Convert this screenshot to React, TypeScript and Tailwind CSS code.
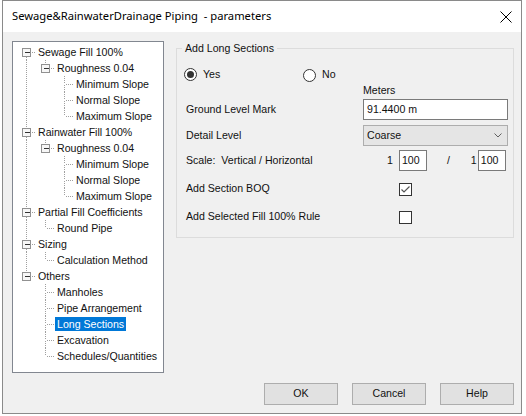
import React from "react";

interface Node {
  label: string;
  selected?: boolean;
  children?: Node[];
}

interface Row {
  label: string;
  level: number;
  selected: boolean;
  hasChildren: boolean;
  hasNext: boolean;
  isFirstRoot: boolean;
  cont: boolean[];
}

const slopes: Node[] = [{ label: "Minimum Slope" }, { label: "Normal Slope" }, { label: "Maximum Slope" }];

const TREE: Node[] = [
  { label: "Sewage Fill 100%", children: [{ label: "Roughness 0.04", children: slopes }] },
  { label: "Rainwater Fill 100%", children: [{ label: "Roughness 0.04", children: slopes }] },
  { label: "Partial Fill Coefficients", children: [{ label: "Round Pipe" }] },
  { label: "Sizing", children: [{ label: "Calculation Method" }] },
  {
    label: "Others",
    children: [
      { label: "Manholes" },
      { label: "Pipe Arrangement" },
      { label: "Long Sections", selected: true },
      { label: "Excavation" },
      { label: "Schedules/Quantities" },
    ],
  },
];

function flatten(nodes: Node[], level: number, cont: boolean[], out: Row[]) {
  nodes.forEach((n, i) => {
    const hasNext = i < nodes.length - 1;
    out.push({
      label: n.label,
      level,
      selected: !!n.selected,
      hasChildren: !!n.children?.length,
      hasNext,
      isFirstRoot: level === 0 && i === 0,
      cont,
    });
    if (n.children) flatten(n.children, level + 1, [...cont, hasNext], out);
  });
  return out;
}

const ROWS = flatten(TREE, 0, [], []);
const COL = 19;

function Connectors({ row }: { row: Row }) {
  const w = COL * (row.level + 1);
  const own = row.level * COL + 9.5;
  return (
    <svg width={w} height={16} className="shrink-0" shapeRendering="crispEdges">
      {row.cont.map((c, j) =>
        c ? (
          <line key={j} x1={j * COL + 9.5} y1={0} x2={j * COL + 9.5} y2={16} stroke="#a0a0a0" strokeDasharray="1 1" />
        ) : null
      )}
      {!row.isFirstRoot && (
        <line x1={own} y1={0} x2={own} y2={8} stroke="#a0a0a0" strokeDasharray="1 1" />
      )}
      {row.hasNext && (
        <line x1={own} y1={9} x2={own} y2={16} stroke="#a0a0a0" strokeDasharray="1 1" />
      )}
      <line x1={own + 1} y1={8.5} x2={w} y2={8.5} stroke="#a0a0a0" strokeDasharray="1 1" />
      {row.hasChildren && (
        <g>
          <rect x={own - 4} y={4.5} width={8} height={8} fill="#f7f7f7" stroke="#919191" />
          <line x1={own - 2} y1={8.5} x2={own + 3} y2={8.5} stroke="#333" />
        </g>
      )}
    </svg>
  );
}

function Radio({ checked }: { checked?: boolean }) {
  return (
    <span className="flex h-[13px] w-[13px] items-center justify-center rounded-full border border-[#333] bg-white">
      {checked && <span className="h-[7px] w-[7px] rounded-full bg-[#333]" />}
    </span>
  );
}

function Check({ checked }: { checked?: boolean }) {
  return (
    <span className="flex h-[13px] w-[13px] items-center justify-center border border-[#333] bg-white">
      {checked && (
        <svg width="11" height="11" viewBox="0 0 11 11">
          <path d="M1.5 5.5 L4 8 L9.5 2.5" fill="none" stroke="#555" strokeWidth="1.2" />
        </svg>
      )}
    </span>
  );
}

export default function App() {
  return (
    <div className="h-[416px] w-[526px] bg-white font-['Liberation_Sans',Arial,sans-serif] text-[10.6px] text-[#111]">
      <div className="ml-[2px] flex h-[414px] w-[520px] flex-col border border-[#8a8a8a]">
        <div className="flex h-[31px] items-center justify-between bg-white pl-[9px] pr-[9px] font-['Noto_Sans',sans-serif] text-[11.2px] text-black">
          <span className="whitespace-pre">Sewage&RainwaterDrainage Piping  - parameters</span>
          <svg width="12" height="12" viewBox="0 0 12 12">
            <path d="M0.5 0.5 L11.5 11.5 M11.5 0.5 L0.5 11.5" stroke="#000" strokeWidth="1" />
          </svg>
        </div>
        <div className="flex flex-1 flex-col bg-[#f0f0f0] pl-[9px] pt-[9px]">
          <div className="flex items-start">
            <div className="h-[332px] w-[152px] border border-[#828790] bg-white pl-[4px] pt-[2px]">
              {ROWS.map((r, i) => (
                <div key={i} className="flex h-[16px] items-center">
                  <Connectors row={r} />
                  <span
                    className={`h-[14px] whitespace-nowrap px-[2px] leading-[14px] ${
                      r.selected ? "bg-[#0078d7] text-white" : ""
                    }`}
                  >
                    {r.label}
                  </span>
                </div>
              ))}
            </div>

            <div className="relative ml-[12px] mt-[7px] h-[190px] w-[338px] border border-[#dcdcdc]">
              <span className="absolute -top-[8px] left-[5px] bg-[#f0f0f0] px-[3px] leading-[14px]">
                Add Long Sections
              </span>
              <div className="mt-[18px] flex h-[16px] items-center pl-[7px]">
                <div className="flex w-[119px] items-center">
                  <Radio checked />
                  <span className="ml-[6px]">Yes</span>
                </div>
                <Radio />
                <span className="ml-[6px]">No</span>
              </div>
              <div className="flex h-[16px] items-center pl-[186px]">Meters</div>
              <div className="flex h-[21px] items-center pl-[9px]">
                <span className="w-[177px]">Ground Level Mark</span>
                <div className="flex h-[21px] w-[145px] items-center border border-[#7a7a7a] bg-white pl-[3px]">
                  91.4400 m
                </div>
              </div>
              <div className="mt-[5px] flex h-[21px] items-center pl-[9px]">
                <span className="w-[177px]">Detail Level</span>
                <div className="flex h-[21px] w-[145px] items-center justify-between border border-[#adadad] bg-[#e5e5e5] pl-[3px] pr-[5px]">
                  <span>Coarse</span>
                  <svg width="8" height="5" viewBox="0 0 8 5">
                    <path d="M0.5 0.5 L4 4 L7.5 0.5" fill="none" stroke="#606060" strokeWidth="1" />
                  </svg>
                </div>
              </div>
              <div className="mt-[4px] flex h-[21px] items-center pl-[9px]">
                <span className="w-[177px] whitespace-pre">Scale:  Vertical / Horizontal</span>
                <span className="ml-[24px]">1</span>
                <div className="ml-[6px] flex h-[21px] w-[28px] items-center border border-[#7a7a7a] bg-white pl-[2px]">
                  100
                </div>
                <span className="ml-[20px]">/</span>
                <span className="ml-[21px]">1</span>
                <div className="ml-[1px] flex h-[21px] w-[28px] items-center border border-[#7a7a7a] bg-white pl-[2px]">
                  100
                </div>
              </div>
              <div className="mt-[11px] flex h-[14px] items-center pl-[9px]">
                <span className="w-[213px]">Add Section BOQ</span>
                <Check checked />
              </div>
              <div className="mt-[14px] flex h-[14px] items-center pl-[9px]">
                <span className="w-[213px]">Add Selected Fill 100% Rule</span>
                <Check />
              </div>
            </div>
          </div>

          <div className="mt-[10px] flex gap-[14px] pl-[252px]">
            {["OK", "Cancel", "Help"].map((b) => (
              <button
                key={b}
                type="button"
                className="flex h-[22px] w-[74px] items-center justify-center border border-[#adadad] bg-[#e1e1e1]"
              >
                {b}
              </button>
            ))}
          </div>
        </div>
      </div>
    </div>
  );
}
